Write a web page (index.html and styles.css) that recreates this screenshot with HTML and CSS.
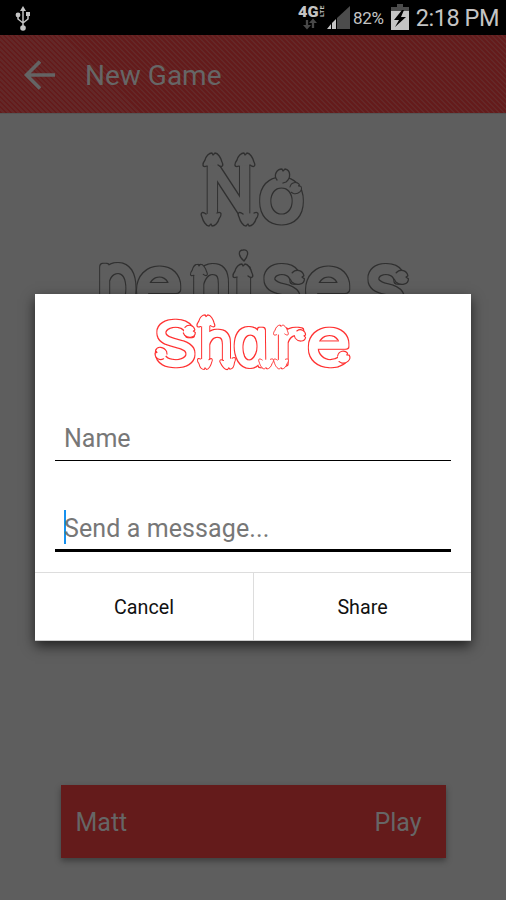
FILE: index.html
```html
<!DOCTYPE html>
<html lang="en">
<head>
<meta charset="utf-8">
<title>New Game</title>
<link rel="stylesheet" href="styles.css">
</head>
<body>
<svg class="defs" width="0" height="0" aria-hidden="true">
  <defs>
    <path id="cap" d="M-6 5C-11 7-11 3-8-1C-7-5-4-8-1-8L0-6L2-8C5-8 8-3 9 1C11 5 9 7 5 4"/>
    <path id="knob" d="M-5 4C-9-1-5-7 0-7L1-5L3-7C9-6 9 2 4 6L1 7"/>
    <filter id="outline-dark" x="-20%" y="-20%" width="140%" height="140%" color-interpolation-filters="sRGB"><feMorphology in="SourceAlpha" operator="dilate" radius="1" result="grown"/><feFlood flood-color="#303030"/><feComposite in2="grown" operator="in"/><feMerge><feMergeNode/><feMergeNode in="SourceGraphic"/></feMerge></filter>
    <filter id="outline-red" x="-20%" y="-20%" width="140%" height="140%" color-interpolation-filters="sRGB"><feMorphology in="SourceAlpha" operator="dilate" radius="1" result="grown"/><feFlood flood-color="#ff3030"/><feComposite in2="grown" operator="in"/><feMerge><feMergeNode/><feMergeNode in="SourceGraphic"/></feMerge></filter>
  </defs>
</svg>
<div class="phone">
  <div class="status">
    <svg class="usb" width="18" height="27" viewBox="0 0 18 27"><path d="M9 4v18M4 10v4l5 4M14 9v5l-5 4" fill="none" stroke="#c4c4c4" stroke-width="1.5"/><path d="M9 1l3 5H6z" fill="#c4c4c4"/><circle cx="4" cy="10" r="2.4" fill="#c4c4c4"/><path d="M12 7h4v4h-4z" fill="#c4c4c4"/><circle cx="9" cy="23" r="2.8" fill="#c4c4c4"/></svg>
    <svg class="network" width="27" height="26" viewBox="0 0 27 26"><text class="fourg" x="0" y="11.500" textLength="20.500" lengthAdjust="spacingAndGlyphs">4G</text><text class="lte" transform="translate(26 12) rotate(-90)" textLength="11.500" lengthAdjust="spacingAndGlyphs">LTE</text><path d="M9 15v6M15 23v-6" stroke="#484848" stroke-width="2.3"/><path d="M5 20h8l-4 4.500zM11 18h8l-4-4.500z" fill="#484848"/></svg>
    <svg class="signal" width="24" height="24" viewBox="0 0 24 24"><path d="M23 0v23H10V12z" fill="#4c4c4c"/><path d="M9 13v10H5v-6zM4 18v5H0z" fill="#c4c4c4"/></svg>
    <span class="percent">82%</span>
    <svg class="battery" width="18" height="26" viewBox="0 0 18 26"><path d="M6 0h6v3h6v4H0V3h6z" fill="#4c4c4c"/><path d="M0 7h18v19H0z" fill="#c4c4c4"/><path d="M11 6L3 16h5l-4 7L15 13h-5l3-7z" fill="#000"/></svg>
    <span class="clock">2:18 PM</span>
  </div>
  <header class="header">
    <svg width="32" height="30" viewBox="0 0 32 30"><path d="M31 15H3M16 1.500L2.500 15L16 28.500" fill="none" stroke="#646464" stroke-width="3.700"/></svg>
    <h1>New Game</h1>
  </header>
  <main class="board">
    <svg class="title" width="506" height="210" viewBox="0 113 506 210">
      <g class="letters dark">
        <text x="205" y="213" font-size="70" textLength="47" lengthAdjust="spacingAndGlyphs">N</text>
        <text x="261" y="219" font-size="73" textLength="41" lengthAdjust="spacingAndGlyphs">o</text>
        <text x="98" y="308" font-size="77" textLength="38" lengthAdjust="spacingAndGlyphs">p</text>
        <text x="138" y="309" font-size="74" textLength="41" lengthAdjust="spacingAndGlyphs">e</text>
        <text x="192" y="308" font-size="76" textLength="38" lengthAdjust="spacingAndGlyphs">n</text>
        <text x="234" y="308" font-size="75" textLength="19" lengthAdjust="spacingAndGlyphs">ı</text>
        <text x="263" y="309" font-size="78" textLength="38" lengthAdjust="spacingAndGlyphs">s</text>
        <text x="307" y="309" font-size="74" textLength="41" lengthAdjust="spacingAndGlyphs">e</text>
        <text x="367" y="309" font-size="78" textLength="38" lengthAdjust="spacingAndGlyphs">s</text>
        <use href="#cap" x="213" y="160"/><use href="#cap" x="245" y="160"/>
        <use href="#cap" transform="translate(211 217) rotate(180)"/><use href="#cap" transform="translate(248 217) rotate(180)"/>
        <use href="#knob" transform="translate(282 175)"/><use href="#knob" transform="translate(295 187) rotate(50) scale(.8)"/>
        <use href="#cap" transform="translate(199 270) scale(.85)"/><use href="#cap" transform="translate(243 271)"/>
        <path d="M244 260C238 255 238 249 243 249C249 248 249 254 244 260Z"/>
        <use href="#knob" transform="translate(297 276) rotate(80)"/><use href="#knob" transform="translate(401 276) rotate(80)"/>
      </g>
    </svg>
    <section class="player"><span>Matt</span><span>Play</span></section>
  </main>
  <section class="dialog" role="dialog">
    <svg class="share-title" width="436" height="90" viewBox="35 294 436 90">
      <g class="letters red">
        <text x="156" y="364" font-size="57" textLength="38" lengthAdjust="spacingAndGlyphs">S</text>
        <text x="200" y="363" font-size="58" textLength="32" lengthAdjust="spacingAndGlyphs">h</text>
        <g class="round-a"><text transform="translate(237 365) skewX(12)" x="0" y="0" font-size="66" textLength="35" lengthAdjust="spacingAndGlyphs">a</text></g>
        <text x="276" y="363" font-size="61" textLength="25" lengthAdjust="spacingAndGlyphs">r</text>
        <text x="309" y="364" font-size="63" textLength="39" lengthAdjust="spacingAndGlyphs">e</text>
        <use href="#knob" transform="translate(189 331) rotate(80) scale(.85)"/><use href="#knob" transform="translate(161 354) rotate(-80) scale(.85)"/>
        <use href="#cap" transform="translate(206 322) scale(.9)"/><use href="#cap" transform="translate(205 363) scale(.75 -.8)"/><use href="#cap" transform="translate(228 363) rotate(170) scale(.8)"/>
        <use href="#cap" transform="translate(266 363) rotate(180) scale(.75)"/><use href="#cap" transform="translate(281 331) scale(.75)"/><use href="#cap" transform="translate(281 363) rotate(180) scale(.75)"/>
        <use href="#knob" transform="translate(300 335) rotate(90) scale(.8)"/><use href="#knob" transform="translate(343 357) rotate(50) scale(.85)"/>
      </g>
    </svg>
    <div class="field"><span>Name</span></div>
    <div class="field focused"><i class="caret"></i><span>Send a message...</span></div>
    <div class="actions"><button>Cancel</button><button>Share</button></div>
  </section>
</div>
</body>
</html>
```

FILE: styles.css
```css
* { box-sizing: border-box; }
body { margin: 0; background: #5e5e5e; font-family: Roboto, sans-serif; }
.defs { position: absolute; }
.phone { position: relative; width: 506px; height: 900px; overflow: hidden; display: flex; flex-direction: column; }
.status { height: 35px; background: #000; color: #c4c4c4; display: flex; align-items: flex-start; padding: 5px 7px 0 14px; flex: none; white-space: nowrap; }
.usb { margin-right: 266px; flex: none; }
.network, .signal, .battery { flex: none; }
.signal { margin: 1px 2px 0 2px; }
.battery { margin: -1px 7px 0 7px; }
.percent { font-size: 17px; line-height: 26px; width: 31px; letter-spacing: -.3px; }
.clock { font-size: 23.5px; line-height: 26px; letter-spacing: -.45px; }
.fourg { font: 900 14px Roboto, sans-serif; fill: #c4c4c4; }
.lte { font: 700 6px Roboto, sans-serif; fill: #c4c4c4; }
.header { height: 79px; flex: none; display: flex; align-items: center; gap: 29px; padding: 1px 0 0 24px; border-bottom: 1px solid #555; background: repeating-linear-gradient(45deg, #641b1b 0 2px, #642828 2px 3.54px); }
.header h1 { margin: 3px 0 0; font-size: 28px; font-weight: 400; color: #666; line-height: 36px; }
.board { flex: 1; display: flex; flex-direction: column; align-items: center; justify-content: space-between; padding-bottom: 42px; }
.title, .share-title { display: block; flex: none; }
.letters { stroke-width: 1.3; stroke-linejoin: round; stroke-linecap: round; font-family: Roboto, sans-serif; font-weight: 100; }
.dark { stroke: #303030; fill: #5e5e5e; }
.dark text { stroke: #5e5e5e; stroke-width: 8px; filter: url(#outline-dark); }
.red { stroke: #ff3030; fill: #fff; }
.red text { stroke: #fff; stroke-width: 5.5px; filter: url(#outline-red); }
.round-a { filter: url(#outline-red); font-family: "Open Sans", sans-serif; font-style: italic; font-weight: 300; }
.red .round-a text { filter: none; stroke-width: 4.5px; }
.player { width: 385px; height: 73px; background: #641b1b; box-shadow: 0 3px 6px rgba(0,0,0,.35); display: flex; align-items: center; justify-content: space-between; padding: 2px 24px 0 15px; color: #666; font-size: 25px; }
.dialog { position: absolute; left: 35px; top: 294px; width: 436px; height: 347px; background: #fff; box-shadow: 0 5px 12px rgba(0,0,0,.65); display: flex; flex-direction: column; }
.field { height: 77px; margin: 0 20px; padding: 0 0 4px 9px; display: flex; align-items: flex-end; border-bottom: 1.5px solid #000; color: #777; font-size: 25px; line-height: 34px; flex: none; }
.focused { height: 91px; border-bottom-width: 3px; }
.focused span { position: relative; top: 1px; letter-spacing: .1px; }
.caret { width: 2px; height: 34px; margin-bottom: 1px; background: #1691ef; margin-right: -2px; }
.actions { height: 69px; margin-top: auto; display: grid; grid-template-columns: 1fr 1fr; border-top: 1px solid #ddd; border-bottom: 1px solid #ccc; }
.actions button { border: 0; background: transparent; padding: 2px 0 0; font: 19.7px Roboto, sans-serif; color: #111; }
.actions button + button { border-left: 1px solid #ddd; }
```
